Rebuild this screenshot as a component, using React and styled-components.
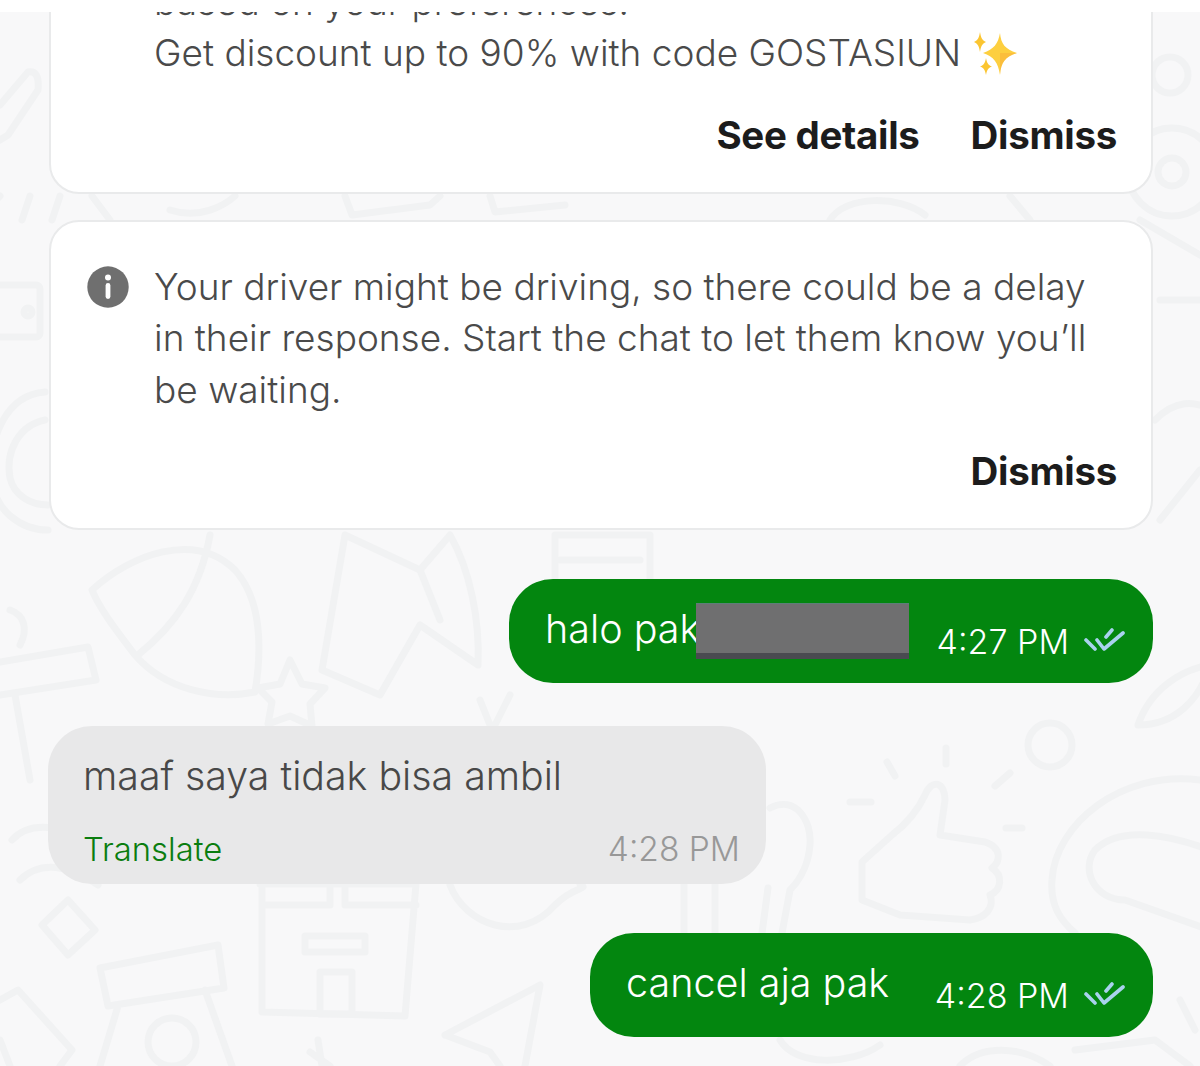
import React from 'react';
import styled, { createGlobalStyle } from 'styled-components';

const GlobalStyle = createGlobalStyle`
  html, body { margin: 0; padding: 0; background: #fff; }
  * { box-sizing: border-box; }
`;

function Doodles() {
  return (
    <DoodleLayer viewBox="0 0 1200 1054" aria-hidden="true">
      <g transform="translate(0,-12)">
        {/* left edge */}
        <path d="M0 105L28 72Q40 70 38 90L8 135L0 140" />
        <rect x="-6" y="285" width="46" height="52" rx="4" />
        <circle cx="28" cy="312" r="4" />
        <path d="M45 392C5 395-12 440-8 480C-5 510 20 530 48 530" />
        <path d="M45 420C20 425 5 450 10 478C14 495 30 505 48 505" />
        <path d="M-4 200L0 196M30 196L22 220M60 196L52 220M92 196L110 220" />
        {/* leaf and arrow shapes below the cards */}
        <path d="M92 590C130 555 195 530 235 570C262 600 262 650 255 692C215 700 165 690 135 655C120 635 100 610 92 590Z" />
        <path d="M138 655C175 625 200 590 210 535" />
        <path d="M10 610C25 615 28 630 20 645" />
        <path d="M322 670L345 535L420 570L450 535C470 570 480 620 478 665L420 625L380 695Z" />
        <path d="M420 570L440 620" />
        <path d="M555 596V535H650V590" />
        <path d="M560 560H640" />
        <path d="M0 662L88 647L96 680L0 695M15 695L30 780" />
        <path d="M290 660L302 684L325 688L310 704L312 726L290 716L268 724L272 702L258 688L280 684Z" />
        <path d="M480 700L490 725M510 695L495 725" />
        {/* spoon, thumb and bowl on the right */}
        <path d="M684 884V933M715 884V933M770 808C795 795 812 820 810 845C808 870 795 885 790 890L782 933M768 888L762 933" />
        <path d="M862 862L892 835C905 825 918 810 925 795C932 778 945 782 945 800L940 835L985 842C1003 848 1000 862 992 868C1003 875 1002 890 990 895C995 908 985 918 970 920L900 915L862 900Z" />
        <path d="M887 762L895 776M946 748V764M995 786L1010 773M850 802H871M1006 828H1022" />
        <circle cx="1050" cy="745" r="22" />
        <path d="M1138 725C1150 690 1180 670 1210 665C1200 700 1175 725 1138 725Z" />
        <path d="M1200 780C1120 770 1055 825 1052 880C1050 905 1060 920 1075 933" />
        <path d="M1095 850C1120 825 1170 835 1210 850M1095 850C1080 870 1095 900 1125 900L1210 930" />
        {/* jar, house, plane */}
        <path d="M100 968L218 945L224 988L108 1006ZM118 1006L100 1066M205 990L232 1066" />
        <circle cx="172" cy="1042" r="24" />
        <path d="M260 884H416M262 884V1012L405 1016L416 884M262 905H330V884M345 884V905H416" />
        <path d="M305 936H365V952H305ZM320 972H352V1014H320Z" />
        <path d="M445 1035L540 985L525 1066M445 1035L490 1052L500 1066" />
        <path d="M450 885C465 925 520 945 555 905C575 885 590 890 580 884" />
        <path d="M0 1000L18 990L72 1050L60 1066M0 1040L10 1066" />
        <path d="M12 840C30 820 65 825 90 845M20 880C40 860 70 865 98 885" />
        <path d="M42 925L68 900L95 930L68 955Z" />
        <path d="M310 1052L330 1066M318 1040L322 1066" />
        <path d="M780 1040C795 1066 850 1066 880 1045M960 1066C980 1045 1020 1045 1050 1066" />
        <path d="M1075 1050L1155 1040L1190 1066M1180 1000L1195 1030" />
        {/* top right rings */}
        <circle cx="1170" cy="75" r="18" />
        <circle cx="1172" cy="172" r="44" />
        <circle cx="1172" cy="172" r="14" />
        <path d="M1140 220L1200 255M1160 300H1200M1155 420C1175 400 1195 400 1210 410M1160 520L1200 470" />
        {/* between the cards */}
        <path d="M170 210C200 220 225 205 235 196M345 196L352 215L430 205L440 196M490 196L495 212L565 205M830 220C845 195 900 195 925 215M1010 196L1030 220" />
      </g>
    </DoodleLayer>
  );
}

function Sparkles() {
  return (
    <SparkleIcon viewBox="0 0 44 44" aria-hidden="true">
      <path d="M26 1C27 12 31 17 43 21C31 25 27 30 26 43C24 30 20 25 9 21C20 17 24 12 26 1Z" fill="#fdcf3f" />
      <path d="M26 21L43 21C31 25 27 30 26 43Z" fill="#f9b13a" opacity="0.55" />
      <path d="M6 0C7 6 8 8 12 10C8 12 7 14 6 20C5 14 4 12 0 10C4 8 5 6 6 0Z" fill="#fbc531" />
      <path d="M12 26C13 31 14 33 18 34.5C14 36 13 38 12 43C11 38 10 36 6 34.5C10 33 11 31 12 26Z" fill="#fbc531" />
    </SparkleIcon>
  );
}

function InfoIcon() {
  return (
    <InfoSvg viewBox="0 0 42 42" aria-hidden="true">
      <circle cx="21" cy="21" r="20.7" fill="#6f6f6f" />
      <circle cx="21" cy="11.5" r="3" fill="#fff" />
      <rect x="18.6" y="17" width="4.8" height="16" rx="2.4" fill="#fff" />
    </InfoSvg>
  );
}

function Ticks() {
  return (
    <TickSvg viewBox="0 0 42 24" aria-hidden="true">
      <path d="M2 12L11 21M13 12L20 21L39 5M22 9L28 2" />
    </TickSvg>
  );
}

export default function App() {
  return (
    <>
      <GlobalStyle />
      <Screen>
        <Doodles />
        <Chat>
          <Card>
            <CardBody>
              <Spacer />
              <CardText>
                based on your preferences.
                <br />
                Get discount up to 90% with code GOSTASIUN <Sparkles />
              </CardText>
            </CardBody>
            <CardActions>
              <ActionButton>See details</ActionButton>
              <ActionButton>Dismiss</ActionButton>
            </CardActions>
          </Card>

          <Card $gap={26}>
            <CardBody>
              <InfoIcon />
              <CardText>
                Your driver might be driving, so there could be a delay
                <br />
                in their response. Start the chat to let them know you’ll
                <br />
                be waiting.
              </CardText>
            </CardBody>
            <CardActions>
              <ActionButton>Dismiss</ActionButton>
            </CardActions>
          </Card>

          <SentBubble $gap={49} $width={644}>
            <SentText>halo pak</SentText>
            <Redaction />
            <SentMeta>
              <SentTime>4:27 PM</SentTime>
              <Ticks />
            </SentMeta>
          </SentBubble>

          <ReceivedBubble>
            <ReceivedText>maaf saya tidak bisa ambil</ReceivedText>
            <ReceivedFooter>
              <TranslateLink>Translate</TranslateLink>
              <ReceivedTime>4:28 PM</ReceivedTime>
            </ReceivedFooter>
          </ReceivedBubble>

          <SentBubble $gap={49} $width={563}>
            <SentText>cancel aja pak</SentText>
            <SentMeta>
              <SentTime>4:28 PM</SentTime>
              <Ticks />
            </SentMeta>
          </SentBubble>
        </Chat>
      </Screen>
    </>
  );
}

const Screen = styled.div`
  position: relative;
  width: 1200px;
  height: 1066px;
  padding-top: 12px;
  background: #fff;
  overflow: hidden;
  font-family: Inter, "Liberation Sans", sans-serif;
`;

const DoodleLayer = styled.svg`
  position: absolute;
  left: 0;
  top: 12px;
  width: 1200px;
  height: 1054px;
  background: #f8f8f9;
  fill: none;
  stroke: #f1f2f3;
  stroke-width: 7;
  stroke-linecap: round;
  stroke-linejoin: round;
`;

const Chat = styled.div`
  position: relative;
  height: 1054px;
  display: flex;
  flex-direction: column;
  justify-content: flex-end;
  padding: 0 47px 29px 49px;
  overflow: hidden;
`;

const Card = styled.section`
  flex: none;
  margin-top: ${({ $gap }) => $gap || 0}px;
  padding: 39px 34px 35px 36px;
  background: #fff;
  border: 2px solid #e9eaeb;
  border-radius: 30px;
`;

const CardBody = styled.div`
  display: flex;
  gap: 25px;
`;

const Spacer = styled.div`
  flex: none;
  width: 42px;
`;

const InfoSvg = styled.svg`
  flex: none;
  width: 42px;
  height: 42px;
  margin-top: 5px;
`;

const CardText = styled.p`
  margin: 0;
  font-size: 37px;
  line-height: 51.5px;
  font-weight: 300;
  color: #4a4a4a;
  white-space: nowrap;
`;

const SparkleIcon = styled.svg`
  display: inline-block;
  width: 44px;
  height: 44px;
  margin-left: 2px;
  vertical-align: -10px;
`;

const CardActions = styled.div`
  display: flex;
  justify-content: flex-end;
  gap: 51px;
  margin-top: 34px;
`;

const ActionButton = styled.button`
  padding: 0;
  border: none;
  background: none;
  font-family: inherit;
  font-size: 38.5px;
  line-height: 44px;
  font-weight: 700;
  letter-spacing: -0.3px;
  color: #1c1c1c;
`;

const SentBubble = styled.div`
  flex: none;
  align-self: flex-end;
  display: flex;
  align-items: center;
  width: ${({ $width }) => $width}px;
  height: 104px;
  margin-top: ${({ $gap }) => $gap}px;
  padding: 0 27px 0 36px;
  background: #03860f;
  border-radius: 44px;
`;

const SentText = styled.span`
  font-size: 39.5px;
  font-weight: 300;
  color: #fff;
  white-space: nowrap;
  margin-top: -5px;
`;

const Redaction = styled.div`
  flex: none;
  width: 213px;
  height: 56px;
  margin-left: -4px;
  background: #6f6f70;
  border-top: 1px solid #5c7f78;
  border-bottom: 6px solid #4a4a50;
`;

const SentMeta = styled.div`
  display: flex;
  align-items: center;
  gap: 15px;
  margin-left: auto;
  margin-top: 20px;
`;

const SentTime = styled.span`
  font-size: 34px;
  font-weight: 300;
  color: #fff;
  white-space: nowrap;
`;

const TickSvg = styled.svg`
  width: 42px;
  height: 24px;
  margin-top: -2px;
  fill: none;
  stroke: #a9d2ee;
  stroke-width: 3.6;
  stroke-linecap: round;
  stroke-linejoin: round;
`;

const ReceivedBubble = styled.div`
  flex: none;
  align-self: flex-start;
  width: 718px;
  height: 158px;
  margin-top: 43px;
  margin-left: -1px;
  padding: 26px 26px 0 35px;
  background: #e8e8e9;
  border-radius: 44px;
`;

const ReceivedText = styled.div`
  font-size: 39.3px;
  line-height: 48px;
  font-weight: 300;
  color: #484848;
`;

const ReceivedFooter = styled.div`
  display: flex;
  justify-content: space-between;
  align-items: center;
  margin-top: 27px;
`;

const TranslateLink = styled.span`
  font-size: 32.8px;
  line-height: 44px;
  font-weight: 300;
  color: #0b7d0f;
`;

const ReceivedTime = styled.span`
  font-size: 33.5px;
  line-height: 44px;
  font-weight: 300;
  color: #989898;
`;
